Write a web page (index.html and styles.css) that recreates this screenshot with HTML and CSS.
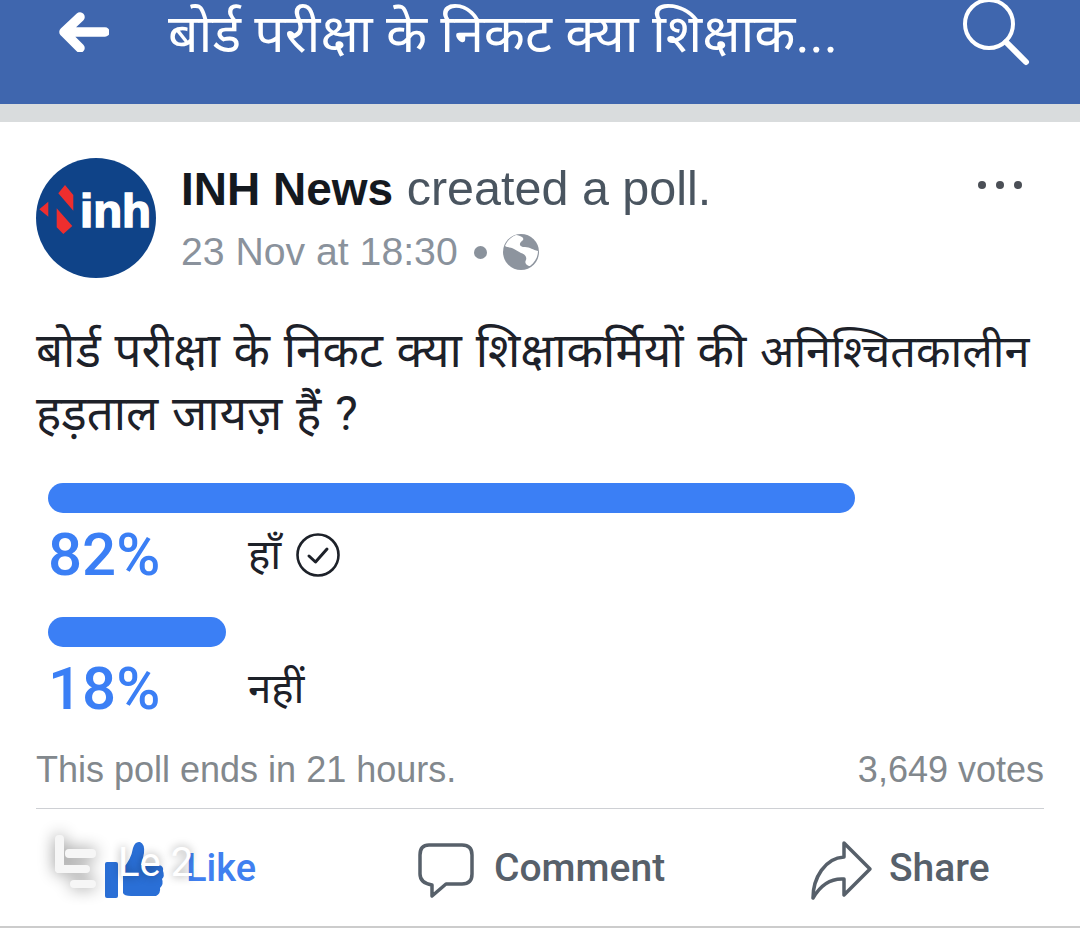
FILE: index.html
```html
<!DOCTYPE html>
<html lang="hi">
<head>
<meta charset="utf-8">
<title>Poll</title>
<link rel="stylesheet" href="styles.css">
</head>
<body>
<header class="topbar">
  <svg class="back" width="50" height="40" viewBox="0 0 50 40"><path d="M21 5 L5 20 L21 36 M8 20 H46" fill="none" stroke="#fff" stroke-width="9.500" stroke-linecap="round" stroke-linejoin="round"/></svg>
  <div class="title">बोर्ड परीक्षा के निकट क्या शिक्षाक...</div>
  <svg class="search" width="72" height="72" viewBox="0 0 72 72"><circle cx="30" cy="28" r="24" fill="none" stroke="#fff" stroke-width="4"/><path d="M47 46 L67 66" stroke="#fff" stroke-width="6" stroke-linecap="round"/></svg>
</header>
<div class="band"></div>
<main class="card">
  <div class="head">
    <svg class="avatar" width="120" height="120" viewBox="0 0 120 120">
      <circle cx="60" cy="60" r="60" fill="#0f4388"/>
      <path d="M3.300 51.300 L12.300 43.700 V58.700 Z M29 27 L37.300 37 V52.700 L22.300 35.300 Z M20.700 50.300 L36.300 68 L27.300 76 L20.700 69.300 Z" fill="#ee2e2e"/>
      <text class="logo" x="44" y="69" textLength="71" lengthAdjust="spacingAndGlyphs">inh</text>
    </svg>
    <div class="meta">
      <div class="headline"><b>INH News</b> created a poll.</div>
      <div class="date">23 Nov at 18:30<span class="dot"></span>
        <svg width="36" height="36" viewBox="0 0 36 36"><circle cx="18" cy="18" r="18" fill="#8d949e"/><path d="M13 1 C8 3 4 7 2 12 C5 14 8 13 11 15 L18 19 C22 20 24 23 23 26 C21 29 24 32 27 32 C32 28 35 23 35 17 C30 16 27 13 22 13 C17 13 15 10 19 7 C22 5 20 2 13 1 Z" fill="#fff"/></svg>
      </div>
    </div>
    <div class="more"><i></i><i></i><i></i></div>
  </div>
  <p class="question">बोर्ड परीक्षा के निकट क्या शिक्षाकर्मियों की <span class="q-last">अनिश्चितकालीन</span> हड़ताल जायज़ हैं ?</p>
  <section class="poll">
    <div class="bar bar-a"></div>
    <div class="opt">
      <span class="pct">82%</span>
      <span class="label">हाँ</span>
      <svg width="46" height="46" viewBox="0 0 46 46"><circle cx="23" cy="23" r="20.500" fill="none" stroke="#1d2129" stroke-width="2.600"/><path d="M14 24 L20.500 30 L32 17" fill="none" stroke="#1d2129" stroke-width="3" stroke-linecap="round" stroke-linejoin="round"/></svg>
    </div>
    <div class="bar bar-b"></div>
    <div class="opt">
      <span class="pct">18%</span>
      <span class="label">नहीं</span>
    </div>
  </section>
  <div class="foot"><span>This poll ends in 21 hours.</span><span>3,649 votes</span></div>
  <div class="actions">
    <div class="act like">
      <svg width="60" height="60" viewBox="0 0 60 60"><path d="M0 23 Q0 21 2 21 H11 Q13 21 13 23 V55 Q13 57 11 57 H2 Q0 57 0 55 Z" fill="#2a6fd6"/><path d="M18 27 Q26 19 28 7 Q30 0 35 1 Q40 3 39 12 Q38 18 36 24 H54 Q59 25 58 30 Q60 35 57 38 Q59 43 55 47 Q56 52 51 55 H26 Q19 55 18 52 Z" fill="#2a6fd6"/></svg>
      <span class="like-text">Like</span>
    </div>
    <div class="act comment">
      <svg width="60" height="60" viewBox="0 0 60 60"><path d="M13 4 H46 Q56 4 56 14 V33 Q56 43 46 43 H30 L16 55 V44 Q4 42 4 33 V14 Q4 4 13 4 Z" fill="none" stroke="#57606a" stroke-width="3.500" stroke-linejoin="round"/></svg>
      <span>Comment</span>
    </div>
    <div class="act share">
      <svg width="64" height="62" viewBox="0 0 64 62"><path d="M34 3 L60 29 L34 55 V39 C20 38 10 46 3 58 C3 38 15 18 34 17 Z" fill="none" stroke="#57606a" stroke-width="3.500" stroke-linejoin="round"/></svg>
      <span>Share</span>
    </div>
  </div>
</main>
<div class="watermark">
  <div class="wm-logo"><i></i><i></i><i></i><i></i></div>
  <span class="wm-text">Le 2</span>
</div>
</body>
</html>
```
FILE: styles.css
```css
* { box-sizing: border-box; }
html, body { margin: 0; padding: 0; }
body {
  width: 1080px;
  height: 935px;
  overflow: hidden;
  position: relative;
  background: #fff;
  font-family: "Liberation Sans", "Noto Sans", sans-serif;
  color: #1d2129;
}
.topbar {
  height: 104px;
  background: #3f66ae;
  display: flex;
  align-items: flex-start;
  color: #fff;
}
.back { margin: 12px 0 0 59px; flex: none; }
.title {
  margin: 2px 0 0 59px;
  width: 791px;
  flex: none;
  font-family: Roboto, "Noto Sans", sans-serif;
  font-size: 53.500px;
  line-height: 64px;
  white-space: nowrap;
  overflow: hidden;
}
.search { flex: none; margin-top: -4px; }
.band { height: 18px; background: #d9dcdd; }
.card { padding: 36px 36px 0; }
.head { display: flex; align-items: flex-start; }
.avatar { flex: none; display: block; }
.logo { font: 700 46px "Liberation Sans", sans-serif; fill: #fff; stroke: #fff; stroke-width: 1.500px; }
.meta { margin-left: 25px; flex: 1; }
.headline { font-size: 48.500px; line-height: 54px; color: #4a5560; margin-top: 3px; }
.headline b { color: #14191f; font-weight: 700; font-size: 46px; }
.date {
  display: flex;
  align-items: center;
  font-size: 39.200px;
  line-height: 44px;
  color: #8a929c;
  margin-top: 14px;
}
.date svg { margin-left: 16px; }
.dot { width: 13px; height: 13px; border-radius: 50%; background: #8a929c; margin-left: 16px; }
.more { display: flex; gap: 10px; margin: 23px 22px 0 0; }
.more i { width: 8px; height: 8px; border-radius: 50%; background: #4b4f56; }
.question {
  margin: 42px 0 0;
  font-family: Roboto, "Noto Sans", sans-serif;
  font-size: 47.500px;
  line-height: 62px;
  word-spacing: 2px;
  color: #1d2129;
}
.q-last { font-size: 45px; }
.poll { margin: 38px 0 0 12px; font-family: Roboto, "Noto Sans", sans-serif; }
.bar { height: 30px; border-radius: 15px; background: #3b7ff5; }
.bar-a { width: 807px; }
.bar-b { width: 178px; margin-top: 31px; }
.opt { display: flex; align-items: center; height: 62px; margin-top: 11px; }
.pct { width: 200px; font-size: 60px; font-weight: 500; color: #3b7ff5; line-height: 62px; }
.label { font-size: 42px; line-height: 62px; color: #1d2129; margin-right: 14px; }
.foot {
  display: flex;
  justify-content: space-between;
  font-size: 36px;
  line-height: 44px;
  color: #82888d;
  margin-top: 28px;
  padding-bottom: 16px;
  border-bottom: 1px solid #ced0d4;
}
.actions {
  display: grid;
  grid-template-columns: 311px 394px auto;
  height: 119px;
  margin: 0 -36px;
  padding: 0 90px 0 105px;
  border-bottom: 2px solid #ccc;
  align-items: center;
  font-family: Roboto, sans-serif;
  font-size: 39px;
  font-weight: 500;
  color: #57606a;
}
.act { display: flex; align-items: center; }
.act svg { margin-top: 6px; }
.like-text { color: #4080f0; margin-left: 21px; font-size: 38px; }
.comment span { margin-left: 18px; }
.share span { margin-left: 15px; }
.watermark {
  position: absolute;
  left: 55px;
  top: 835px;
  width: 140px;
  height: 60px;
  color: #fff;
}
.wm-logo { position: absolute; left: 0; top: 0; width: 44px; height: 56px; filter: drop-shadow(0 0 8px rgba(0,0,0,.45)); }
.wm-logo i { position: absolute; background: #f6f6f6; border-radius: 4px; }
.wm-logo i:nth-child(1) { left: 0; top: 0; width: 9px; height: 38px; }
.wm-logo i:nth-child(2) { left: 0; top: 30px; width: 35px; height: 8px; }
.wm-logo i:nth-child(3) { left: 10px; top: 14px; width: 31px; height: 9px; }
.wm-logo i:nth-child(4) { left: 15px; top: 45px; width: 26px; height: 8px; }
.wm-text {
  position: absolute;
  left: 63px;
  top: 6px;
  font-family: Roboto, sans-serif;
  font-weight: 400;
  font-size: 40px;
  line-height: 44px;
  text-shadow: 0 0 10px rgba(0,0,0,.4);
}
```
